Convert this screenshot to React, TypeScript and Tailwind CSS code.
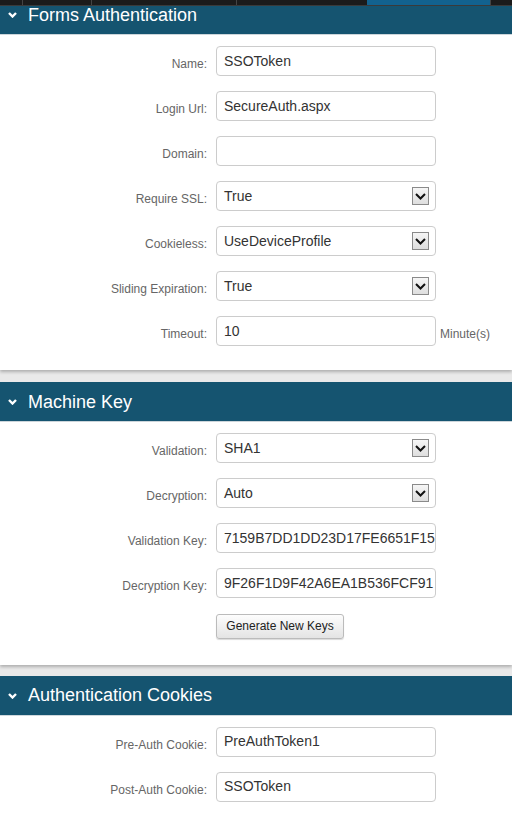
type Row = {
  label: string;
  value: string;
  kind?: "text" | "select";
  suffix?: string;
};

const forms: Row[] = [
  { label: "Name:", value: "SSOToken" },
  { label: "Login Url:", value: "SecureAuth.aspx" },
  { label: "Domain:", value: "" },
  { label: "Require SSL:", value: "True", kind: "select" },
  { label: "Cookieless:", value: "UseDeviceProfile", kind: "select" },
  { label: "Sliding Expiration:", value: "True", kind: "select" },
  { label: "Timeout:", value: "10", suffix: "Minute(s)" },
];

const machine: Row[] = [
  { label: "Validation:", value: "SHA1", kind: "select" },
  { label: "Decryption:", value: "Auto", kind: "select" },
  { label: "Validation Key:", value: "7159B7DD1DD23D17FE6651F15" },
  { label: "Decryption Key:", value: "9F26F1D9F42A6EA1B536FCF91" },
];

const cookies: Row[] = [
  { label: "Pre-Auth Cookie:", value: "PreAuthToken1" },
  { label: "Post-Auth Cookie:", value: "SSOToken" },
];

function Header({ title, first }: { title: string; first?: boolean }) {
  return (
    <div
      className={`flex h-[40px] items-center gap-[11px] border-b border-[#cfd8dd] bg-[#155470] pl-[8px] text-white ${
        first ? "-mt-[11px]" : ""
      }`}
    >
      <svg width="9" height="6" viewBox="0 0 9 6" className="mt-[1px]">
        <polyline points="1,1 4.5,4.5 8,1" fill="none" stroke="#fff" strokeWidth="2.4" />
      </svg>
      <span className="text-[18px] leading-none">{title}</span>
    </div>
  );
}

function Field({ row }: { row: Row }) {
  return (
    <div className="flex h-[30px] items-center">
      <label className="w-[207px] pt-[6px] text-right text-[12px] text-[#666]">{row.label}</label>
      <div className="relative ml-[9px] flex h-[30px] w-[220px] items-center overflow-hidden rounded-[4px] border border-[#ccc] bg-white pl-[7px] text-[14px] text-[#333]">
        <span className="whitespace-nowrap">{row.value}</span>
        {row.kind === "select" && (
          <span className="absolute right-[6px] top-[5px] flex h-[18px] w-[17px] items-center justify-center border border-[#8a8a8a] bg-gradient-to-b from-[#f6f6f6] to-[#dedede]">
            <svg width="11" height="7" viewBox="0 0 11 7">
              <polyline points="1,1 5.5,5.5 10,1" fill="none" stroke="#111" strokeWidth="2" />
            </svg>
          </span>
        )}
      </div>
      {row.suffix && <span className="ml-[4px] pt-[6px] text-[12px] text-[#666]">{row.suffix}</span>}
    </div>
  );
}

export default function App() {
  return (
    <div className="w-[512px] overflow-hidden bg-[#e9e9e9] font-['Liberation_Sans',Arial,sans-serif]">
      <div className="relative z-10 flex h-[6px] border-b border-[#3a3a3a] bg-[#1b1b1b]">
        <div className="w-[22px]" />
        <div className="w-[69px] border-l border-[#444]" />
        <div className="w-[145px] border-l border-[#444]" />
        <div className="w-[131px] border-l border-[#444]" />
        <div className="w-[123px] bg-[#12628f]" />
        <div className="flex-1 border-l border-[#444]" />
      </div>

      <Header title="Forms Authentication" first />
      <div className="flex flex-col gap-[15px] bg-white pt-[11px] pb-[24px] shadow-[0_2px_3px_rgba(0,0,0,0.25)]">
        {forms.map(r => (
          <Field key={r.label} row={r} />
        ))}
      </div>

      <div className="h-[12px]" />
      <Header title="Machine Key" />
      <div className="flex flex-col gap-[15px] bg-white pt-[11px] pb-[26px] shadow-[0_2px_3px_rgba(0,0,0,0.25)]">
        {machine.map(r => (
          <Field key={r.label} row={r} />
        ))}
        <div className="pl-[216px]">
          <button className="h-[25px] w-[128px] rounded-[3px] border border-[#bbb] bg-gradient-to-b from-[#fdfdfd] to-[#e4e4e4] text-[12px] text-[#222] shadow-[0_1px_1px_rgba(0,0,0,0.15)]">
            Generate New Keys
          </button>
        </div>
      </div>

      <div className="h-[11px]" />
      <Header title="Authentication Cookies" />
      <div className="flex flex-col gap-[15px] bg-white pt-[11px] pb-[40px]">
        {cookies.map(r => (
          <Field key={r.label} row={r} />
        ))}
      </div>
    </div>
  );
}
